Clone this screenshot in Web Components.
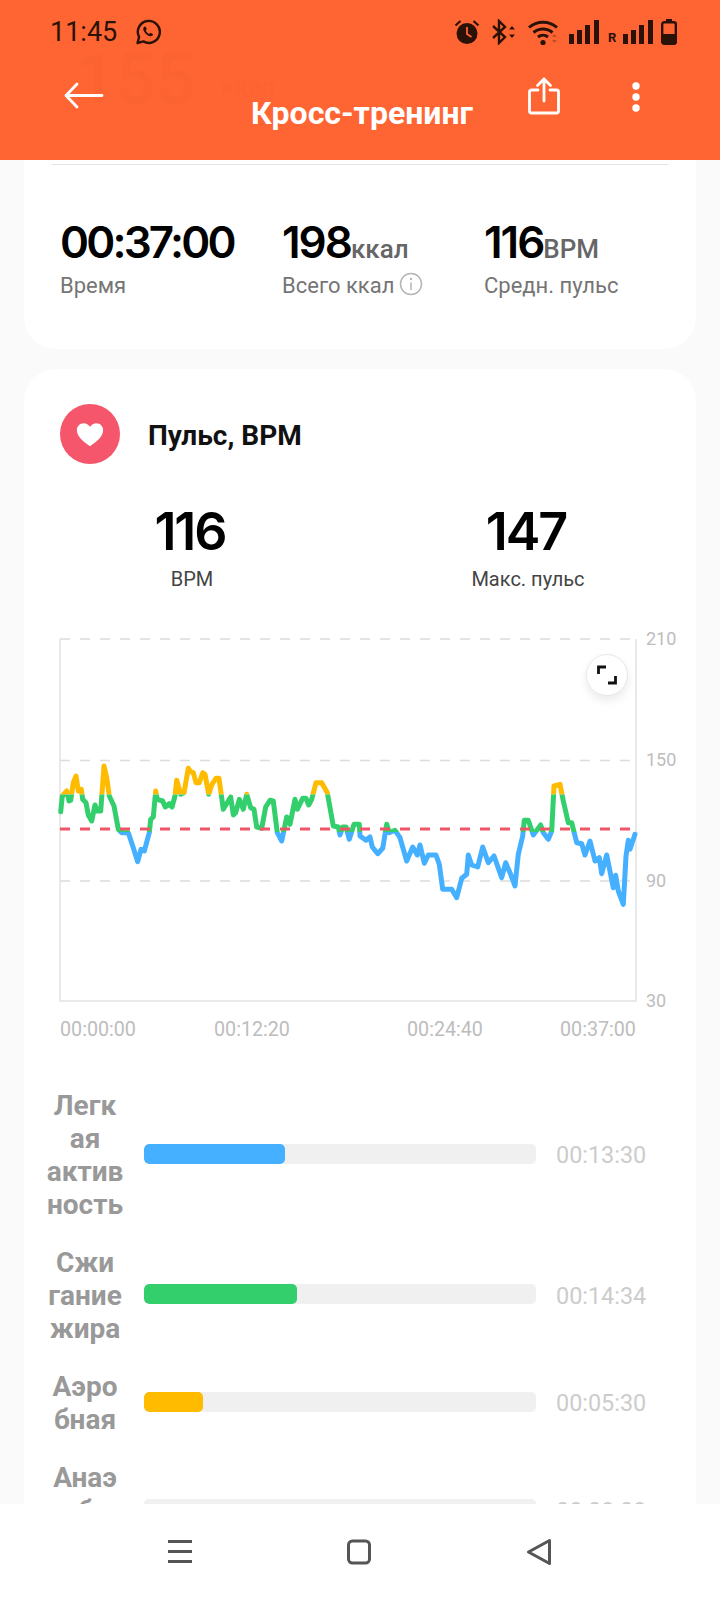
<!DOCTYPE html>
<html lang="ru">
<head>
<meta charset="utf-8">
<title>Кросс-тренинг</title>
<style>
    html, body {
        margin: 0;
        height: 100%;
    }
    body {
        width: 720px;
        height: 1600px;
        overflow: hidden;
        display: flex;
        flex-direction: column;
        background: #fafafa;
        font-family: Roboto, "Liberation Sans", sans-serif;
    }
    page-body {
        flex: 1;
        min-height: 0;
    }
</style>
</head>
<body>
<workout-header title-text="Кросс-тренинг"></workout-header>
<page-body>
    <summary-card>
        <stat-item value="00:37:00" label="Время" tight></stat-item>
        <stat-item value="198" unit="ккал" label="Всего ккал" info></stat-item>
        <stat-item value="116" unit="BPM" label="Средн. пульс"></stat-item>
    </summary-card>
    <pulse-card>
        <zone-row color="#45b0ff" percent="36" time="00:13:30">Легк<br>ая<br>актив<br>ность</zone-row>
        <zone-row color="#33cf6d" percent="39" time="00:14:34">Сжи<br>гание<br>жира</zone-row>
        <zone-row color="#ffbb00" percent="15" time="00:05:30">Аэро<br>бная</zone-row>
        <zone-row color="#ffbb00" percent="0" time="00:00:00">Анаэ<br>робна<br>я</zone-row>
    </pulse-card>
</page-body>
<nav-bar></nav-bar>

<script>
class WorkoutHeader extends HTMLElement {
    constructor() {
        super();
        const shadow = this.attachShadow({ mode: 'open' });
        shadow.innerHTML = `
            <style>
                :host {
                    display: block;
                    position: relative;
                    height: 160px;
                    flex: none;
                    background: #ff6533;
                    overflow: hidden;
                }
                .ghost {
                    position: absolute;
                    left: 76px;
                    top: 54px;
                    font-size: 70px;
                    line-height: 50px;
                    font-weight: 500;
                    color: #fb6330;
                    white-space: nowrap;
                }
                .ghost small {
                    position: relative;
                    top: -8px;
                    font-size: 24px;
                    margin-left: 26px;
                }
                .status {
                    position: absolute;
                    left: 50px;
                    right: 43px;
                    top: 17px;
                    height: 30px;
                    display: flex;
                    align-items: center;
                    color: #2a1208;
                }
                .time {
                    font-size: 27px;
                    width: 85px;
                }
                .spacer { flex: 1; }
                .status svg { display: block; flex: none; }
                .r {
                    font-size: 13px;
                    font-weight: 700;
                    width: 8px;
                    margin: 10px 6px 0 8px;
                }
                .bar {
                    position: absolute;
                    left: 0;
                    right: 0;
                    top: 62px;
                    height: 90px;
                }
                .bar svg { position: absolute; display: block; }
                .back { left: 64px; top: 20px; }
                .share { left: 528px; top: 15px; }
                .more { left: 631px; top: 18px; }
                h1 {
                    margin: 0;
                    padding: 33px 0 0 4px;
                    text-align: center;
                    color: #fff;
                    font-size: 32px;
                    line-height: 36px;
                    font-weight: 700;
                }
            </style>
            <div class="ghost">155<small>ккал</small></div>
            <div class="status">
                <span class="time">11:45</span>
                <svg width="26" height="26" viewBox="0 0 26 26" fill="none" stroke="currentColor" stroke-width="2.4">
                    <path d="M2.5 24l1.6-6A11 11 0 1 1 8.300 22.400z" stroke-linejoin="round"/>
                    <path d="M9.500 7.500c-1.600 1-1.700 3 -.3 5.300 1.500 2.500 3.800 4.300 6 4.500 1.500.1 2.600-.7 2.900-2l-2.700-1.500-1.200 1.300c-1.500-.6-2.800-2-3.500-3.500l1.100-1.300-1.100-2.500z" fill="currentColor" stroke="none"/>
                </svg>
                <span class="spacer"></span>
                <svg width="28" height="28" viewBox="0 0 28 28" style="margin-right:9px">
                    <circle cx="14" cy="15.500" r="10.500" fill="currentColor"/>
                    <path d="M14 9v7l4.500 3" fill="none" stroke="#ff6533" stroke-width="1.800"/>
                    <path d="M2.500 7.500L7.500 3M25.500 7.500L20.500 3" stroke="currentColor" stroke-width="2.200"/>
                </svg>
                <svg width="26" height="26" viewBox="0 0 26 26" style="margin-right:11px" fill="none" stroke="currentColor" stroke-width="2.400">
                    <path d="M3 7l12 11-6 6V2l6 6L3 19"/>
                    <path d="M19 10.500l3-3.500 3 3.500zM19 15.500l3 3.500 3-3.500z" fill="currentColor" stroke="none"/>
                </svg>
                <svg width="34" height="28" viewBox="0 0 34 28" style="margin-right:7px" fill="none" stroke="currentColor" stroke-width="3">
                    <path d="M2 9.500a21 21 0 0 1 28 0M6.500 14.500a14.500 14.500 0 0 1 19 0M11 19a8 8 0 0 1 10 0"/>
                    <circle cx="16" cy="24.500" r="2.600" fill="currentColor" stroke="none"/>
                    <path d="M25 19l2.500-3 2.500 3zM25 22l2.500 3 2.500-3z" fill="#c84a20" stroke="none"/>
                </svg>
                <svg width="32" height="24" viewBox="0 0 32 24" fill="currentColor">
                    <rect x="1" y="14" width="5" height="10"/><rect x="9" y="10" width="5" height="14"/><rect x="17" y="5" width="5" height="19"/><rect x="26" y="0" width="5" height="24"/>
                </svg>
                <span class="r">R</span>
                <svg width="32" height="24" viewBox="0 0 32 24" fill="currentColor">
                    <rect x="1" y="14" width="5" height="10"/><rect x="9" y="10" width="5" height="14"/><rect x="17" y="5" width="5" height="19"/><rect x="26" y="0" width="5" height="24"/>
                </svg>
                <svg width="16" height="26" viewBox="0 0 16 26" style="margin-left:7px">
                    <rect x="5" y="0" width="6" height="3" fill="currentColor"/>
                    <rect x="1.200" y="3.200" width="13.600" height="21.600" rx="2" fill="none" stroke="currentColor" stroke-width="2.400"/>
                    <rect x="1" y="15" width="14" height="10" rx="2" fill="currentColor"/>
                </svg>
            </div>
            <div class="bar">
                <svg class="back" width="40" height="28" viewBox="0 0 40 28" fill="none" stroke="#fff" stroke-width="2.800" stroke-linecap="round" stroke-linejoin="round">
                    <path d="M38 13.500H2M13 2L2 13.500 13 25"/>
                </svg>
                <svg class="share" width="32" height="38" viewBox="0 0 32 38" fill="none" stroke="#fff" stroke-width="2.800" stroke-linecap="round" stroke-linejoin="round">
                    <path d="M10 13H3.500a2 2 0 0 0-2 2v19a2 2 0 0 0 2 2h25a2 2 0 0 0 2-2V15a2 2 0 0 0-2-2H22"/>
                    <path d="M16 24V2M9.500 8.500L16 2l6.500 6.500"/>
                </svg>
                <svg class="more" width="10" height="34" viewBox="0 0 10 34" fill="#fff">
                    <circle cx="5" cy="6" r="3.700"/><circle cx="5" cy="17" r="3.700"/><circle cx="5" cy="28" r="3.700"/>
                </svg>
                <h1></h1>
            </div>
        `;
    }

    connectedCallback() {
        this.shadowRoot.querySelector('h1').textContent = this.getAttribute('title-text');
    }
}

class PageBody extends HTMLElement {
    constructor() {
        super();
        const shadow = this.attachShadow({ mode: 'open' });
        shadow.innerHTML = `
            <style>
                :host {
                    display: flex;
                    flex-direction: column;
                    gap: 20px;
                    padding: 0 24px;
                    overflow: hidden;
                    background: #fafafa;
                }
            </style>
            <slot></slot>
        `;
    }
}

class SummaryCard extends HTMLElement {
    constructor() {
        super();
        const shadow = this.attachShadow({ mode: 'open' });
        shadow.innerHTML = `
            <style>
                :host {
                    display: block;
                    flex: none;
                    height: 189px;
                    padding: 4px 28px 0;
                    box-sizing: border-box;
                    background: #fff;
                    border-radius: 0 0 32px 32px;
                }
                hr {
                    margin: 0;
                    border: 0;
                    height: 1px;
                    background: #e4e4e4;
                }
                .stats {
                    display: grid;
                    grid-template-columns: 222px 202px 1fr;
                    padding: 53px 0 0 8px;
                }
            </style>
            <hr>
            <div class="stats"><slot></slot></div>
        `;
    }
}

class StatItem extends HTMLElement {
    constructor() {
        super();
        const shadow = this.attachShadow({ mode: 'open' });
        shadow.innerHTML = `
            <style>
                :host { display: block; }
                .value {
                    font-family: Inter, Roboto, sans-serif;
                    font-size: 44px;
                    line-height: 48px;
                    font-weight: 600;
                    color: #000;
                    letter-spacing: -2px;
                    white-space: nowrap;
                }
                :host([tight]) .value { letter-spacing: -2.800px; }
                .unit {
                    font-family: Roboto, sans-serif;
                    font-size: 26px;
                    font-weight: 500;
                    color: #666;
                    letter-spacing: 0;
                }
                .label {
                    display: flex;
                    align-items: center;
                    gap: 5px;
                    margin-top: -1px;
                    font-size: 22px;
                    line-height: 28px;
                    color: #757575;
                    white-space: nowrap;
                }
                svg { display: block; margin-top: -4px; }
            </style>
            <div class="value"><span id="value"></span><span class="unit" id="unit"></span></div>
            <div class="label"><span id="label"></span></div>
        `;
    }

    connectedCallback() {
        const root = this.shadowRoot;
        root.getElementById('value').textContent = this.getAttribute('value');
        root.getElementById('unit').textContent = this.getAttribute('unit') || '';
        root.getElementById('label').textContent = this.getAttribute('label');
        if (this.hasAttribute('info')) {
            root.querySelector('.label').insertAdjacentHTML('beforeend', `
                <svg width="24" height="24" viewBox="0 0 24 24" fill="none" stroke="#b5b5b5" stroke-width="1.500">
                    <circle cx="12" cy="12" r="10.500"/>
                    <path d="M12 10.500V18"/>
                    <circle cx="12" cy="7" r="1.200" fill="#b5b5b5" stroke="none"/>
                </svg>`);
        }
    }
}

class PulseCard extends HTMLElement {
    constructor() {
        super();
        const shadow = this.attachShadow({ mode: 'open' });
        shadow.innerHTML = `
            <style>
                :host {
                    display: block;
                    flex: none;
                    padding: 35px 0 0;
                    background: #fff;
                    border-radius: 32px 32px 0 0;
                }
                .title {
                    display: flex;
                    align-items: center;
                    gap: 28px;
                    padding-left: 36px;
                    font-size: 28px;
                    font-weight: 700;
                    color: #111;
                }
                .title span:last-child { padding-top: 3px; }
                .heart {
                    width: 60px;
                    height: 60px;
                    border-radius: 50%;
                    background: #f5566b;
                    display: flex;
                    align-items: center;
                    justify-content: center;
                }
                .peaks {
                    display: grid;
                    grid-template-columns: 332px 1fr;
                    margin-top: 38px;
                    text-align: center;
                }
                .peak b {
                    display: block;
                    font-family: Inter, Roboto, sans-serif;
                    font-size: 52px;
                    line-height: 60px;
                    font-weight: 600;
                    color: #000;
                    letter-spacing: -2px;
                }
                .peak span {
                    display: block;
                    margin: 3px 0 0 4px;
                    font-size: 20px;
                    line-height: 28px;
                    color: #444;
                }
                .peak:last-child { width: 332px; margin-left: 4px; }
                pulse-chart { margin-top: 28px; }
                .zones {
                    display: flex;
                    flex-direction: column;
                    gap: 25px;
                    margin-top: 43px;
                }
            </style>
            <div class="title">
                <span class="heart">
                    <svg width="28" height="25" viewBox="0 0 32 28" fill="#fff">
                        <path d="M16 27.500C6 20.500 1 15 1 8.800 1 4.200 4.600 1 8.700 1 11.700 1 14.500 2.600 16 5.200 17.500 2.600 20.300 1 23.300 1 27.400 1 31 4.200 31 8.800 31 15 26 20.500 16 27.500z"/>
                    </svg>
                </span>
                <span>Пульс, BPM</span>
            </div>
            <div class="peaks">
                <div class="peak"><b>116</b><span>BPM</span></div>
                <div class="peak"><b>147</b><span>Макс. пульс</span></div>
            </div>
            <pulse-chart></pulse-chart>
            <div class="zones"><slot></slot></div>
        `;
    }
}

// coordinates traced from the picture, in page pixels
const LEFT_TRACE = [[62,212],[67,165],[80,150],[87,180],[92,178],[100,125],[108,105],[115,150],[124,145],[128,175],[138,185],[145,222],[155,240],[165,192],[172,210],[182,210],[192,75],[200,110],[208,165],[222,195],[235,265],[245,275],[265,275],[280,320],[293,362],[303,325],[313,330],[328,275],[332,235],[340,228],[347,150],[352,175],[368,180],[376,198],[388,188],[396,198],[405,165],[410,118],[422,160],[432,155],[445,82],[452,92],[460,95],[468,125],[478,125],[488,95],[495,100],[506,160],[516,130],[528,112],[537,112],[550,205],[572,168],[580,222],[587,215],[598,175],[610,205],[620,160],[632,200],[642,205],[650,258],[665,262],[677,198],[690,178],[700,180],[712,275],[725,300],[740,228],[750,250],[765,175],[772,205],[788,172],[798,172],[806,192],[815,175],[828,125],[845,125],[862,155],[880,255],[895,258],[900,282],[908,258],[918,258],[928,295],[942,250],[958,250]];
const RIGHT_TRACE = [[60,285],[78,298],[90,288],[97,318],[113,338],[128,322],[140,250],[148,275],[165,268],[180,290],[200,360],[218,318],[232,342],[240,312],[253,367],[265,342],[288,342],[298,370],[308,445],[335,445],[350,470],[365,412],[380,400],[385,342],[395,372],[413,378],[428,318],[445,365],[462,345],[485,410],[497,365],[510,395],[525,435],[535,340],[548,285],[553,238],[565,238],[580,282],[602,252],[610,275],[625,295],[635,270],[642,135],[660,130],[670,180],[685,245],[695,245],[710,305],[725,308],[735,342],[750,300],[765,360],[778,350],[785,398],[800,342],[820,440],[827,403],[835,450],[850,490],[858,345],[865,298],[870,325],[885,280]];

class PulseChart extends HTMLElement {
    constructor() {
        super();
        const shadow = this.attachShadow({ mode: 'open' });
        const toPage = (origin) => ([x, y]) => `${(origin + x / 3).toFixed(1)},${(740 + y / 3).toFixed(1)}`;
        const points = LEFT_TRACE.map(toPage(40)).concat(RIGHT_TRACE.map(toPage(340))).join(' ');
        const yLabels = [[210, 638], [150, 759], [90, 880], [30, 1000]].map(([t, y]) =>
            `<text x="646" y="${y + 6}" class="tick">${t}</text>`).join('');
        const xLabels = [[60, '00:00:00'], [214, '00:12:20'], [407, '00:24:40'], [560, '00:37:00']].map(([x, t]) =>
            `<text x="${x}" y="1035" class="tick wide">${t}</text>`).join('');
        const grid = [638, 759.5, 880].map((y) =>
            `<line x1="60" x2="636" y1="${y}" y2="${y}" stroke="#dcdcdc" stroke-width="1.500" stroke-dasharray="10 10"/>`).join('');
        shadow.innerHTML = `
            <style>
                :host {
                    display: block;
                    position: relative;
                    width: 660px;
                    height: 425px;
                    margin-left: 16px;
                }
                svg { display: block; }
                .tick {
                    font-family: Roboto, "Liberation Sans", sans-serif;
                    font-size: 18px;
                    fill: #bdbdbd;
                }
                .wide { font-size: 19.700px; }
                .expand {
                    position: absolute;
                    left: 546px;
                    top: 33px;
                    width: 42px;
                    height: 42px;
                    border-radius: 50%;
                    background: #fff;
                    border: 1px solid #e8e8e8;
                    box-sizing: border-box;
                    box-shadow: 0 5px 10px rgba(0, 0, 0, 0.08);
                    display: flex;
                    align-items: center;
                    justify-content: center;
                }
            </style>
            <svg width="660" height="425" viewBox="40 620 660 425">
                <defs>
                    <clipPath id="high"><rect x="40" y="620" width="660" height="173.500"/></clipPath>
                    <clipPath id="mid"><rect x="40" y="793.500" width="660" height="37.500"/></clipPath>
                    <clipPath id="low"><rect x="40" y="831" width="660" height="170"/></clipPath>
                </defs>
                ${grid}
                <path d="M60 638V1000H636V638" fill="none" stroke="#e2e2e2" stroke-width="1.500"/>
                <g fill="none" stroke-width="5" stroke-linejoin="round" stroke-linecap="round">
                    <polyline points="${points}" stroke="#ffbb00" clip-path="url(#high)"/>
                    <polyline points="${points}" stroke="#33cf6d" clip-path="url(#mid)"/>
                    <polyline points="${points}" stroke="#45b0ff" clip-path="url(#low)"/>
                </g>
                <line x1="60" x2="636" y1="828" y2="828" stroke="#ee5566" stroke-width="3" stroke-dasharray="10 10"/>
                ${yLabels}
                ${xLabels}
            </svg>
            <div class="expand">
                <svg width="20" height="20" viewBox="0 0 20 20" fill="none" stroke="#111" stroke-width="2.800">
                    <path d="M1.500 9V2H9M18.500 11V18H11"/>
                </svg>
            </div>
        `;
    }
}

class ZoneRow extends HTMLElement {
    constructor() {
        super();
        const shadow = this.attachShadow({ mode: 'open' });
        shadow.innerHTML = `
            <style>
                :host {
                    display: grid;
                    grid-template-columns: 84px 392px auto;
                    column-gap: 17px;
                    align-items: center;
                    padding-left: 19px;
                }
                .name {
                    text-align: center;
                    font-size: 28px;
                    line-height: 33px;
                    font-weight: 700;
                    color: #999;
                }
                .track {
                    height: 20px;
                    border-radius: 5px;
                    background: #f0f0f0;
                    overflow: hidden;
                    margin-top: -3px;
                }
                .fill {
                    height: 100%;
                    border-radius: 5px;
                }
                .time {
                    margin-left: 3px;
                    font-size: 23.400px;
                    color: #cccccc;
                }
            </style>
            <div class="name"><slot></slot></div>
            <div class="track"><div class="fill"></div></div>
            <div class="time"></div>
        `;
    }

    connectedCallback() {
        const fill = this.shadowRoot.querySelector('.fill');
        fill.style.background = this.getAttribute('color');
        fill.style.width = this.getAttribute('percent') + '%';
        this.shadowRoot.querySelector('.time').textContent = this.getAttribute('time');
    }
}

class NavBar extends HTMLElement {
    constructor() {
        super();
        const shadow = this.attachShadow({ mode: 'open' });
        shadow.innerHTML = `
            <style>
                :host {
                    display: flex;
                    flex: none;
                    height: 96px;
                    background: #fff;
                    align-items: center;
                    justify-content: center;
                    gap: 155px;
                    box-sizing: border-box;
                }
                svg { display: block; }
            </style>
            <svg width="24" height="24" viewBox="0 0 24 24" fill="#555">
                <rect y="0" width="24" height="3"/><rect y="10" width="24" height="3"/><rect y="20" width="24" height="3"/>
            </svg>
            <svg width="24" height="26" viewBox="0 0 24 26" fill="none" stroke="#555" stroke-width="3">
                <rect x="1.500" y="2" width="21" height="22" rx="4"/>
            </svg>
            <svg width="26" height="28" viewBox="0 0 26 28" fill="none" stroke="#555" stroke-width="3" stroke-linejoin="round">
                <path d="M23.500 2.500V25.500L2.500 14z"/>
            </svg>
        `;
    }
}

customElements.define('workout-header', WorkoutHeader);
customElements.define('page-body', PageBody);
customElements.define('summary-card', SummaryCard);
customElements.define('stat-item', StatItem);
customElements.define('pulse-card', PulseCard);
customElements.define('pulse-chart', PulseChart);
customElements.define('zone-row', ZoneRow);
customElements.define('nav-bar', NavBar);
</script>
</body>
</html>
